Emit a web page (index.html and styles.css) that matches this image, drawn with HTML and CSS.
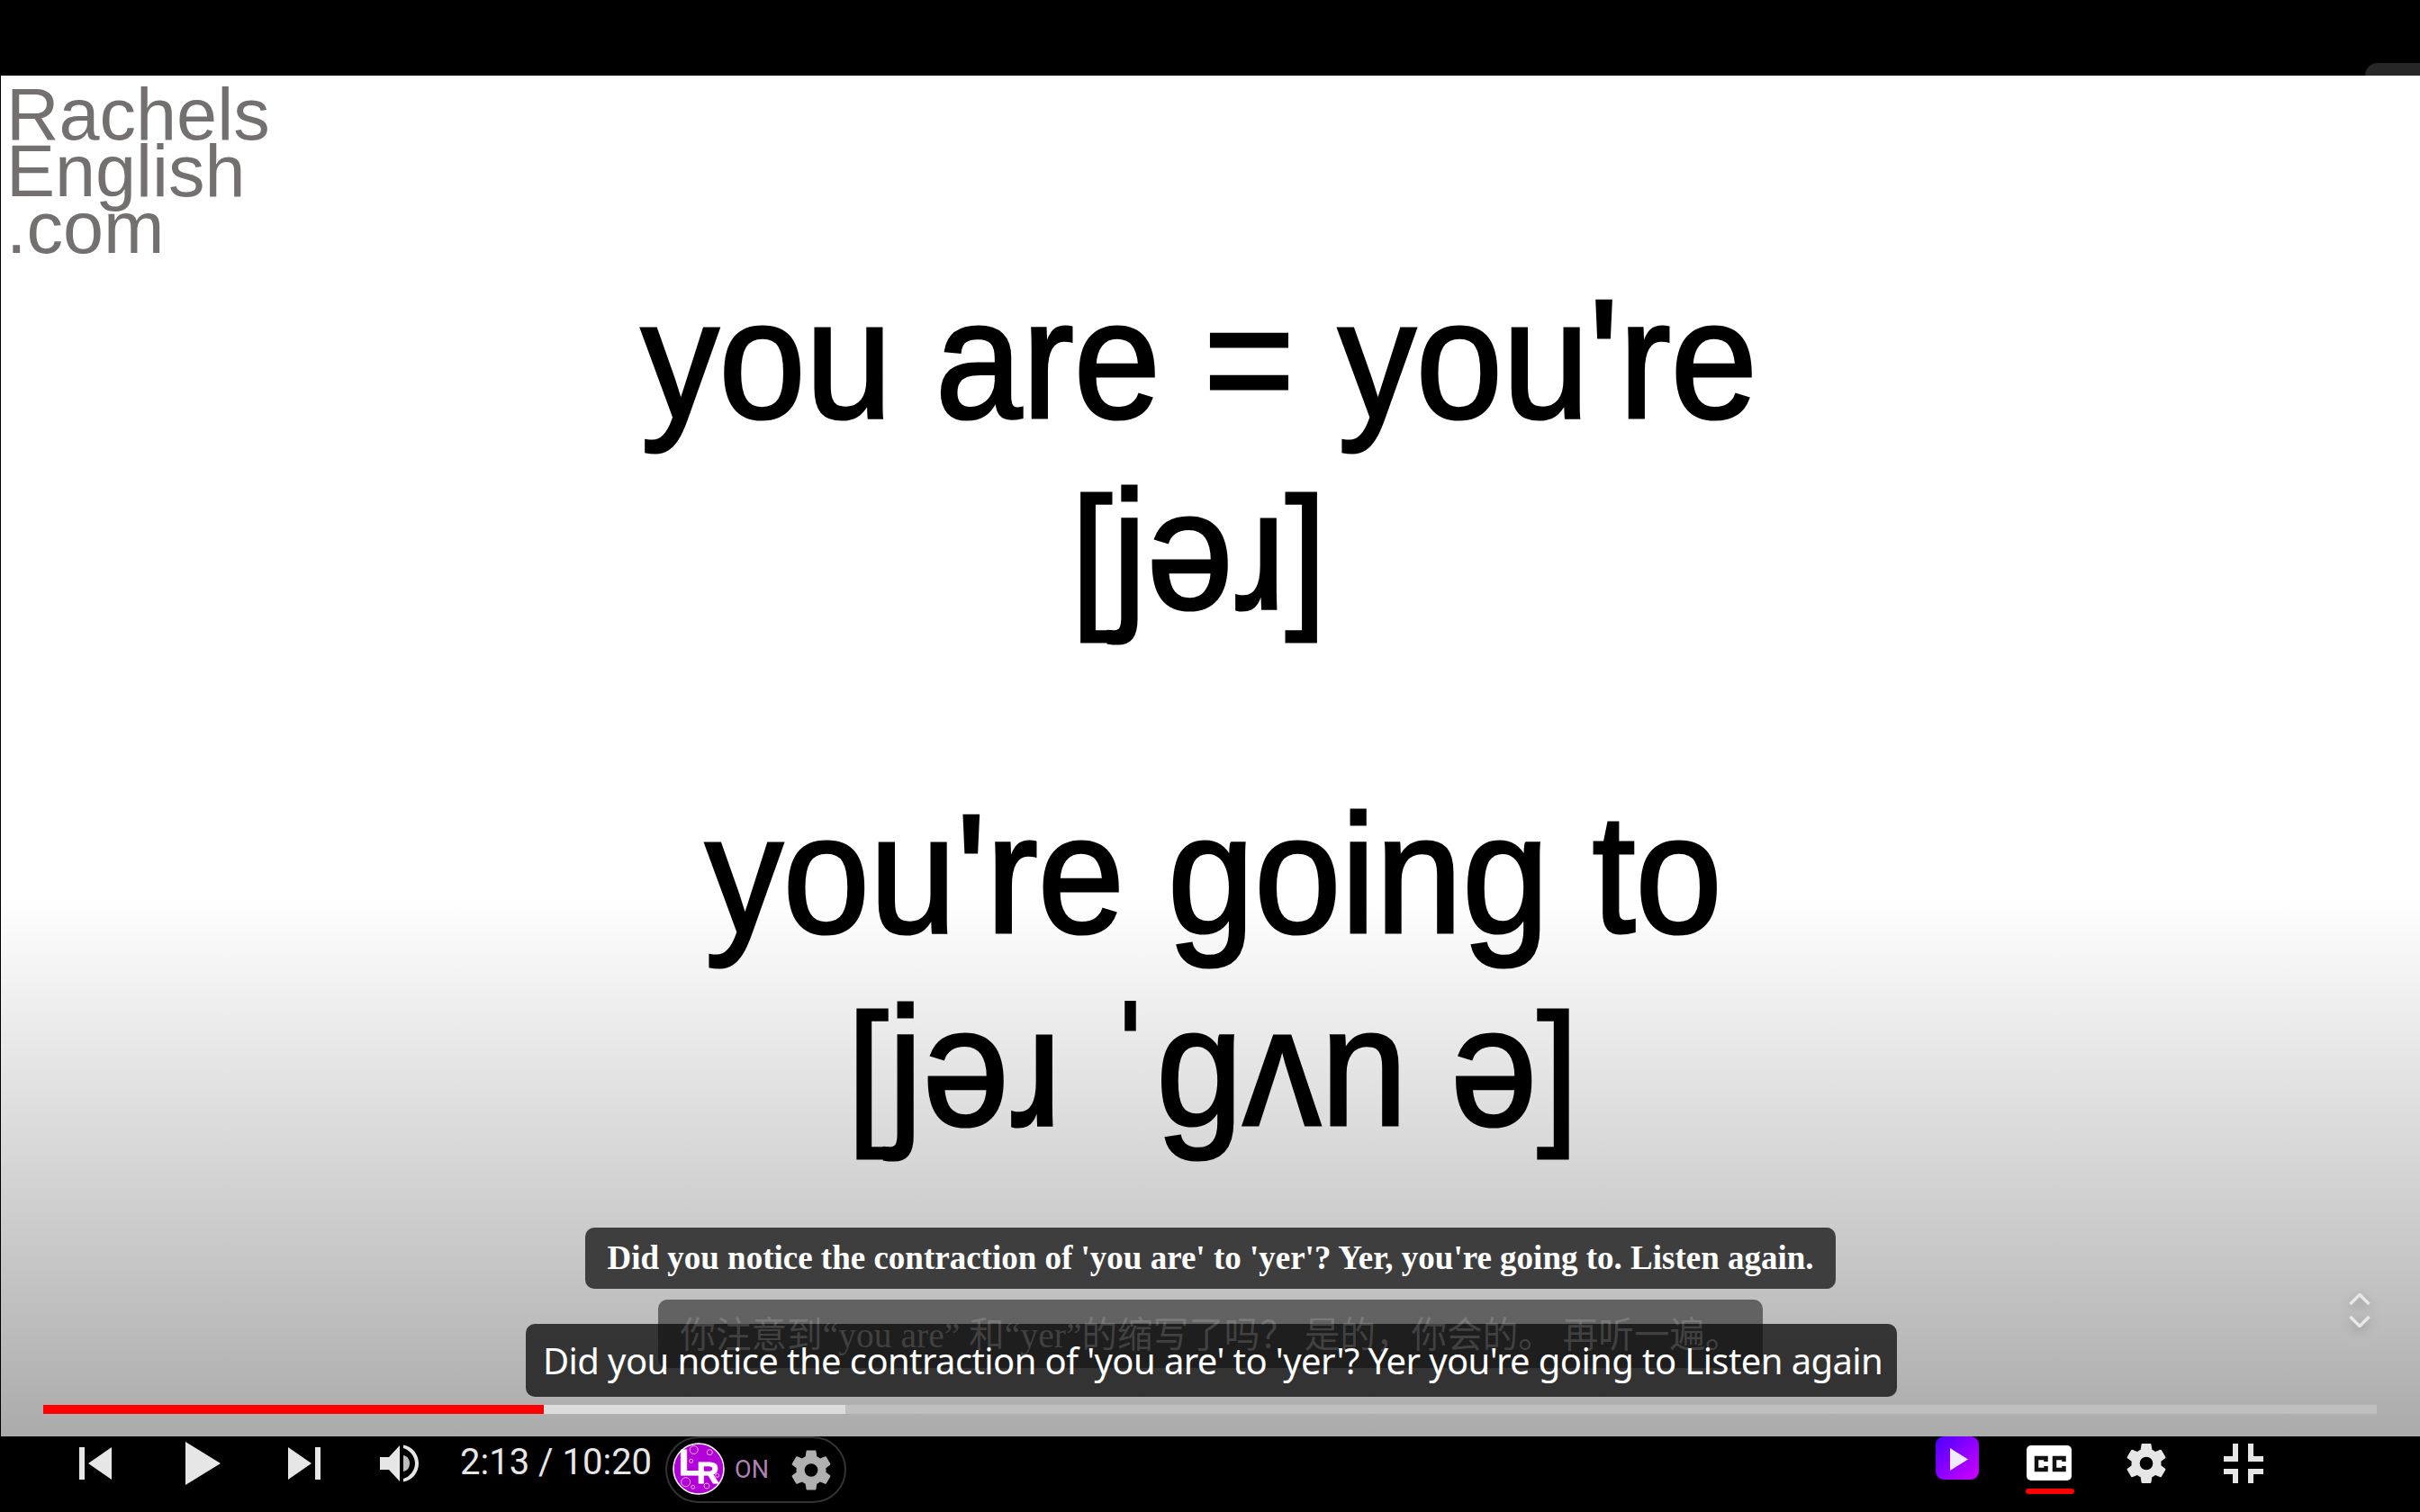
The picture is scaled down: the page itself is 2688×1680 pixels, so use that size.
FILE: index.html
```html
<!DOCTYPE html>
<html lang="en">
<head>
    <meta charset="UTF-8">
    <meta name="viewport" content="width=device-width, initial-scale=1.0">
    <title>Rachels English player</title>
    <link rel="stylesheet" href="styles.css">
</head>
<body>
    <svg class="defs" width="0" height="0">
        <symbol id="gear" viewBox="2.4 2 19.2 20">
            <path fill-rule="evenodd" d="M19.14 12.94c.04-.3.06-.61.06-.94 0-.32-.02-.64-.07-.94l2.03-1.58c.18-.14.23-.41.12-.61l-1.92-3.32c-.12-.22-.37-.29-.59-.22l-2.39.96c-.5-.38-1.03-.7-1.62-.94l-.36-2.54c-.04-.24-.24-.41-.48-.41h-3.84c-.24 0-.43.17-.47.41l-.36 2.54c-.59.24-1.13.57-1.62.94l-2.39-.96c-.22-.08-.47 0-.59.22L2.74 8.87c-.12.21-.08.47.12.61l2.03 1.58c-.05.3-.09.63-.09.94s.02.64.07.94l-2.03 1.58c-.18.14-.23.41-.12.61l1.92 3.32c.12.22.37.29.59.22l2.39-.96c.5.38 1.03.7 1.62.94l.36 2.54c.05.24.24.41.48.41h3.84c.24 0 .44-.17.47-.41l.36-2.54c.59-.24 1.13-.56 1.62-.94l2.39.96c.22.08.47 0 .59-.22l1.92-3.32c.12-.22.07-.47-.12-.61l-2.01-1.58zM12 15.2a3.2 3.2 0 1 1 0-6.4 3.2 3.2 0 0 1 0 6.4z"/>
        </symbol>
    </svg>

    <div class="top-bar"></div>
    <div class="corner-tab"></div>

    <div class="video">
        <div class="logo">Rachels<br>English<br>.com</div>

        <div class="slide">
            <div class="slide-line line-one">you are = you're</div>
            <div class="slide-line line-two"><span class="bracket">[</span>jəɹ<span class="bracket">]</span></div>
            <div class="slide-line line-three">you're going to</div>
            <div class="slide-line line-four"><span class="bracket">[</span>jəɹ ˈgʌn ə<span class="bracket">]</span></div>
        </div>

        <svg class="chevrons" viewBox="0 0 24 38" width="24" height="38">
            <path d="M1.5 12 12 1.5 22.5 12M1.5 26 12 36.5 22.5 26"/>
        </svg>

        <div class="captions">
            <div class="cap cap-en"><span>Did you notice the contraction of 'you are' to 'yer'? Yer, you're going to. Listen again.</span></div>
            <div class="cap cap-zh"><span>你注意到“you are” 和“yer”的缩写了吗？ 是的，你会的。 再听一遍。</span></div>
        </div>
        <div class="cap cap-auto"><span>Did you notice the contraction of 'you are' to 'yer'? Yer you're going to Listen again</span></div>

        <div class="progress">
            <div class="progress-buffer"></div>
            <div class="progress-played"></div>
        </div>
    </div>

    <div class="controls">
        <svg class="btn btn-prev" viewBox="0 0 36 36" width="36" height="36">
            <path d="M0 0h6v36H0zM10 18 36 0v36z"/>
        </svg>
        <svg class="btn btn-play" viewBox="0 0 39 48" width="39" height="48">
            <path d="M0 0 39 24 0 48z"/>
        </svg>
        <svg class="btn btn-next" viewBox="0 0 36 36" width="36" height="36">
            <path d="M0 0 26 18 0 36zM30 0h6v36h-6z"/>
        </svg>
        <svg class="btn btn-volume" viewBox="0 0 44 44" width="44" height="44">
            <path d="M0 15h10L22 2v40L10 29H0z"/>
            <path class="vol-inner" d="M26 13c5 1 7 5 7 9s-2 8-7 9z"/>
            <path d="M26 1.5C36 3 43 12 43 22s-7 19-17 20.500V39c7-2 13-9 13-17S33 7 26 5z"/>
        </svg>
        <div class="time">2:13 / 10:20</div>

        <div class="ext-pill">
            <svg class="lr-logo" viewBox="0 0 58 58" width="58" height="58">
                <circle cx="29" cy="29" r="28" fill="#b400d8" stroke="#fff" stroke-width="1.500"/>
                <g fill="none" stroke="#e9b8f2" stroke-width="1">
                    <circle cx="23.700" cy="8" r="4.500"/>
                    <circle cx="41.300" cy="10.700" r="3"/>
                    <circle cx="20.700" cy="20.300" r="2"/>
                    <circle cx="49.700" cy="36.300" r="2"/>
                    <circle cx="14.700" cy="43.700" r="5"/>
                    <circle cx="38" cy="48" r="3"/>
                    <circle cx="22.700" cy="49.300" r="2"/>
                </g>
                <text class="lr-l" x="7" y="36">L</text>
                <text class="lr-r" x="27" y="45">R</text>
            </svg>
            <span class="ext-on">ON</span>
            <svg class="ext-gear" width="44" height="47"><use href="#gear"/></svg>
        </div>

        <div class="controls-right">
            <svg class="app-icon" viewBox="0 0 48 48" width="48" height="48">
                <defs>
                    <linearGradient id="appFill" x1="0" y1="0" x2="1" y2="1">
                        <stop offset="0" stop-color="#4a00ff"/>
                        <stop offset="1" stop-color="#d000ff"/>
                    </linearGradient>
                </defs>
                <rect width="48" height="48" rx="9" fill="url(#appFill)"/>
                <path d="M16 13 36 25.500 16 38z" fill="#f4eaff"/>
            </svg>
            <div class="cc">
                <svg class="cc-icon" viewBox="0 0 50 39" width="50" height="39">
                    <rect width="50" height="39" rx="5" fill="#fff"/>
                    <path d="M21.500 18v-4H11v13h10.500v-4M41.500 18v-4H31v13h10.500v-4" fill="none" stroke="#111" stroke-width="4.500"/>
                </svg>
                <div class="cc-line"></div>
            </div>
            <svg class="right-gear" width="44" height="46"><use href="#gear"/></svg>
            <svg class="btn-exit" viewBox="0 0 44 44" width="44" height="44">
                <path d="M10 0h6v20H0v-6h10zM27 0h6v14h11v6H27zM0 28h16v16h-6V34H0zM27 28h17v6H33v10h-6z"/>
            </svg>
        </div>
    </div>
</body>
</html>
```
FILE: styles.css
```css
html, body {
    margin: 0;
    padding: 0;
}
body {
    width: 2688px;
    height: 1680px;
    overflow: hidden;
    background-color: #000;
    font-family: "Liberation Sans", Arial, sans-serif;
    position: relative;
}
.defs {
    position: absolute;
}
.top-bar {
    height: 84px;
}
.corner-tab {
    position: absolute;
    top: 70px;
    right: 0;
    width: 61px;
    height: 14px;
    background-color: #272727;
    border-top-left-radius: 26px;
}

/* video frame */
.video {
    position: relative;
    height: 1512px;
    margin-left: 1px;
    background: linear-gradient(to bottom, #fff 60.500%, #ababab 100%);
}
.logo {
    padding: 12px 0 0 6px;
    font-size: 81px;
    line-height: 63px;
    color: #747070;
    filter: blur(0.7px);
}
.slide {
    display: flex;
    flex-direction: column;
    align-items: center;
    margin-top: 8px;
    color: #000;
    font-size: 173px;
    line-height: 212px;
    white-space: pre;
}
.slide-line {
    transform: scaleY(1.08);
    -webkit-text-stroke: 3px #000;
    filter: blur(0.6px);
}
.bracket {
    font-size: 163px;
}
.line-one {
    margin-right: 25px;
}
.line-two {
    margin-right: 26px;
}
.line-three {
    margin-top: 144px;
    margin-left: 7px;
}
.line-four {
    margin-top: 2px;
    margin-left: 5px;
}
.chevrons {
    position: absolute;
    top: 1353px;
    right: 55px;
    fill: none;
    stroke: #e8e8e8;
    stroke-width: 3.500;
    filter: drop-shadow(0 4px 6px rgba(0, 0, 0, 0.25));
}

/* captions */
.captions {
    position: absolute;
    left: 0;
    right: 0;
    bottom: 76px;
    display: flex;
    flex-direction: column;
    align-items: center;
    gap: 12px;
}
.cap {
    border-radius: 10px;
    white-space: nowrap;
}
.cap span {
    position: relative;
}
.cap-en {
    height: 68px;
    padding: 0 24px;
    background-color: #3e3e3e;
    color: #fff;
    font-family: "Liberation Serif", serif;
    font-weight: bold;
    font-size: 37px;
    line-height: 68px;
}
.cap-zh {
    position: relative;
    height: 76px;
    padding: 0 24px;
    background-color: #626262;
    font-family: "Liberation Serif", "Noto Sans CJK SC", serif;
    font-size: 39.600px;
    line-height: 80px;
}
.cap-zh span {
    z-index: 1;
    color: rgba(255, 255, 255, 0.16);
}
.cap-auto {
    position: absolute;
    left: 583px;
    bottom: 44px;
    height: 81px;
    padding: 0 16px 0 19px;
    background-color: rgba(8, 8, 8, 0.75);
    color: #fff;
    font-family: "Noto Sans", sans-serif;
    font-size: 40px;
    letter-spacing: -0.6px;
    line-height: 82px;
}
.cap-auto span {
    z-index: 2;
}
.progress {
    position: absolute;
    left: 47px;
    bottom: 25px;
    width: 2592px;
    height: 10px;
    background-color: rgba(255, 255, 255, 0.2);
}
.progress-buffer {
    position: absolute;
    left: 0;
    top: 0;
    bottom: 0;
    width: 891px;
    background-color: #dcdcdc;
}
.progress-played {
    position: absolute;
    left: 0;
    top: 0;
    bottom: 0;
    width: 556px;
    background-color: #f00;
}

/* control bar */
.controls {
    display: flex;
    align-items: center;
    height: 60px;
    padding-left: 88px;
    padding-bottom: 24px;
    fill: #e6e6e6;
}
.btn {
    flex: none;
}
.btn-play {
    margin-left: 82px;
}
.btn-next {
    margin-left: 75px;
}
.btn-volume {
    margin-left: 66px;
}
.vol-inner {
    fill: #bdbdbd;
}
.time {
    margin-left: 45px;
    margin-bottom: 4px;
    font-family: Roboto, sans-serif;
    font-size: 40px;
    color: #e6e6e6;
}
.ext-pill {
    align-self: flex-start;
    box-sizing: border-box;
    display: flex;
    align-items: center;
    width: 201px;
    height: 74px;
    margin-left: 15px;
    padding-left: 6px;
    border: 2px solid #333;
    border-radius: 37px;
}
.lr-logo {
    flex: none;
    margin-bottom: 2px;
}
.lr-l, .lr-r {
    fill: #fff;
    stroke: #fff;
    stroke-width: 1;
    font-family: "Liberation Sans", sans-serif;
    font-weight: bold;
}
.lr-l {
    font-size: 40px;
}
.lr-r {
    font-size: 34px;
}
.ext-on {
    margin-left: 11px;
    font-family: Roboto, sans-serif;
    font-size: 27px;
    color: #ae80b4;
}
.ext-gear {
    margin-left: 25px;
    fill: #b0b0b0;
}
.controls-right {
    align-self: flex-start;
    display: flex;
    align-items: flex-start;
    margin-left: auto;
    margin-right: 174px;
}
.cc {
    margin-left: 52px;
    padding-top: 10px;
}
.cc-icon {
    display: block;
    margin-left: 1px;
}
.cc-line {
    width: 54px;
    height: 6px;
    margin-top: 9px;
    border-radius: 3px;
    background-color: #f00;
}
.right-gear {
    margin-left: 58px;
    margin-top: 7px;
}
.btn-exit {
    margin-left: 64px;
    margin-top: 8px;
}
```
